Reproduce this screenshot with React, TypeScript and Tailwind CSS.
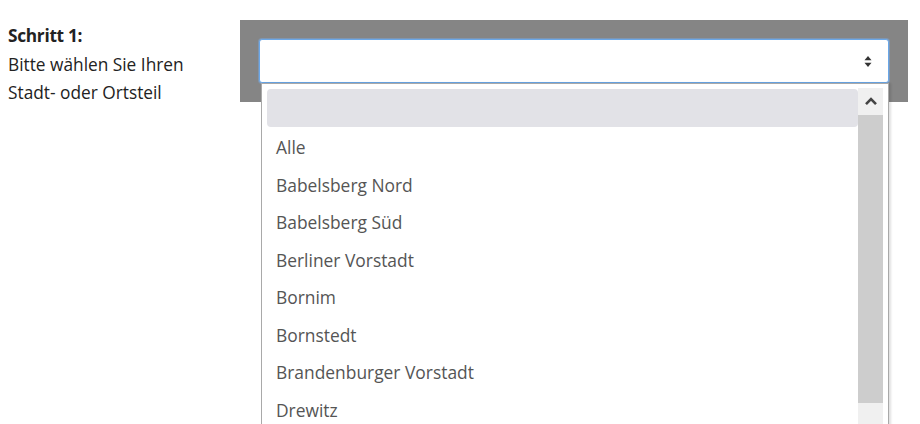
import React from 'react';

const OPTIONS = [
  'Alle',
  'Babelsberg Nord',
  'Babelsberg Süd',
  'Berliner Vorstadt',
  'Bornim',
  'Bornstedt',
  'Brandenburger Vorstadt',
  'Drewitz',
];

function SortArrows() {
  return (
    <svg width="8" height="11" viewBox="0 0 8 11" className="text-[#333]">
      <path d="M4 0 L7.5 4.2 L0.5 4.2 Z" fill="currentColor" />
      <path d="M4 11 L7.5 6.8 L0.5 6.8 Z" fill="currentColor" />
    </svg>
  );
}

function ChevronUp() {
  return (
    <svg width="14" height="9" viewBox="0 0 14 9">
      <path d="M2 7.2 L7 2.2 L12 7.2" fill="none" stroke="#444" strokeWidth="2.6" strokeLinejoin="miter" />
    </svg>
  );
}

export default function App() {
  return (
    <div
      className="relative flex w-[920px] h-[424px] overflow-hidden bg-white"
      style={{ fontFamily: '"Open Sans", "Noto Sans", sans-serif' }}
    >
      {/* Step label */}
      <div className="w-[240px] pl-2 pt-[22px] text-[17.3px] leading-[28.5px] text-[#222]">
        <div className="font-bold tracking-[-0.3px]">Schritt 1:</div>
        <div>Bitte wählen Sie Ihren</div>
        <div>Stadt- oder Ortsteil</div>
      </div>

      {/* Gray select panel */}
      <div className="mt-[20px] h-[82px] w-[668px] bg-[#858585] pl-[19px] pt-[19px]">
        <div className="relative w-[630px]">
          <div className="flex h-[44px] items-center justify-end rounded-[3px] border border-[#6aa7e8] bg-white pr-[16px] shadow-[0_0_0_1px_rgba(120,170,230,0.45)]">
            <SortArrows />
          </div>

          {/* Open dropdown list */}
          <div className="absolute left-[2px] top-[44px] flex h-[360px] w-[628px] border border-[#a9a9a9] bg-white shadow-[2px_0_2px_rgba(0,0,0,0.12)]">
            <div className="flex-1 pl-[5px] pt-[5px]">
              <div className="h-[38px] rounded-[4px] bg-[#e2e2e7]" />
              <div className="pt-[1.5px]">
                {OPTIONS.map((opt) => (
                  <div
                    key={opt}
                    className="flex h-[37.5px] items-center pl-[9px] text-[17.4px] text-[#555]"
                  >
                    {opt}
                  </div>
                ))}
              </div>
            </div>
            <div className="mr-[5px] mt-[4px] flex w-[25px] flex-col">
              <div className="flex h-[27px] items-center justify-center bg-[#f0f0f0]">
                <ChevronUp />
              </div>
              <div className="h-[288px] bg-[#cdcdcd]" />
              <div className="flex-1 bg-[#f0f0f0]" />
            </div>
          </div>
        </div>
      </div>
    </div>
  );
}
